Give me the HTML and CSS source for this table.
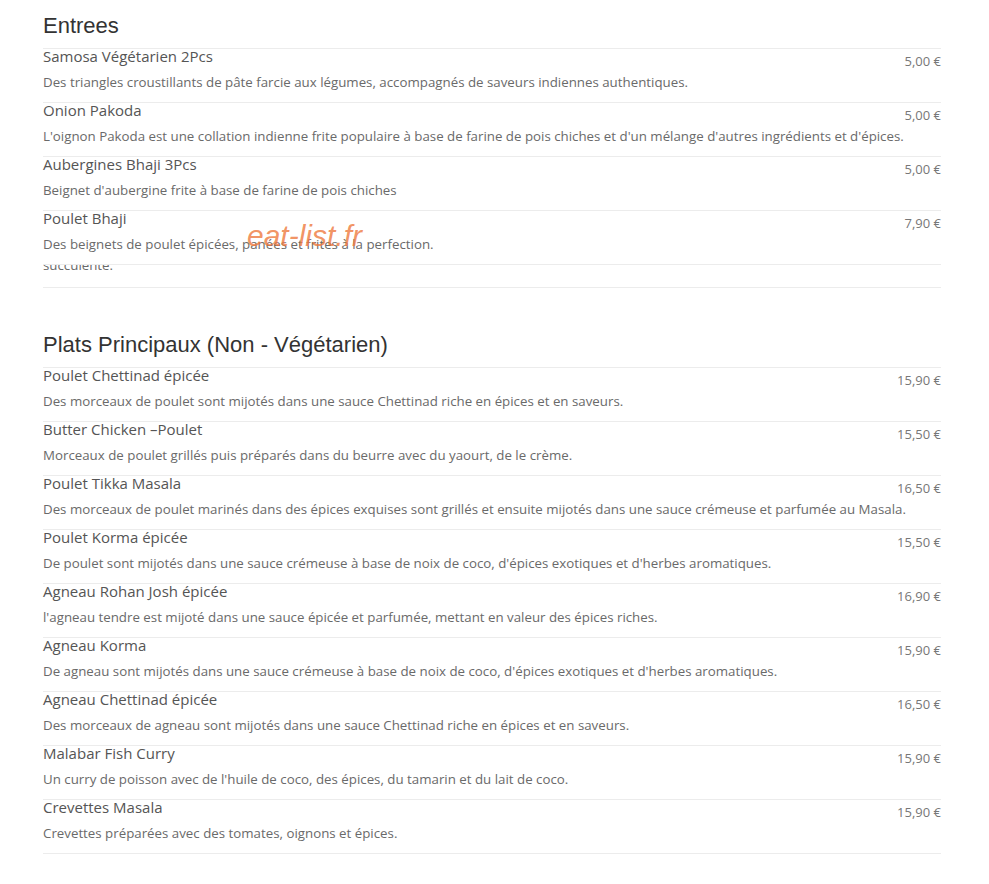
FILE: index.html
```html
<!DOCTYPE html>
<html lang="fr">
<head>
<meta charset="utf-8">
<title>Menu</title>
<link rel="stylesheet" href="styles.css">
</head>
<body>
<div class="page">
  <section class="section first">
    <h2 class="section-title">Entrees</h2>
    <ul class="items">
      <li class="item">
        <div class="name">Samosa Végétarien 2Pcs</div><div class="price">5,00 €</div>
        <div class="desc">Des triangles croustillants de pâte farcie aux légumes, accompagnés de saveurs indiennes authentiques.</div>
      </li>
      <li class="item">
        <div class="name">Onion Pakoda</div><div class="price">5,00 €</div>
        <div class="desc">L'oignon Pakoda est une collation indienne frite populaire à base de farine de pois chiches et d'un mélange d'autres ingrédients et d'épices.</div>
      </li>
      <li class="item">
        <div class="name">Aubergines Bhaji 3Pcs</div><div class="price">5,00 €</div>
        <div class="desc">Beignet d'aubergine frite à base de farine de pois chiches</div>
      </li>
      <li class="item">
        <div class="name">Poulet Bhaji</div><div class="price">7,90 €</div>
        <div class="desc">Des beignets de poulet épicées, panées et frites à la perfection.</div>
        <span class="watermark">eat-list.fr</span>
      </li>
      <li class="item clipped">
        <div class="clip-text">succulente.</div>
      </li>
    </ul>
  </section>

  <section class="section">
    <h2 class="section-title">Plats Principaux (Non - Végétarien)</h2>
    <ul class="items">
      <li class="item">
        <div class="name">Poulet Chettinad épicée</div><div class="price">15,90 €</div>
        <div class="desc">Des morceaux de poulet sont mijotés dans une sauce Chettinad riche en épices et en saveurs.</div>
      </li>
      <li class="item">
        <div class="name">Butter Chicken –Poulet</div><div class="price">15,50 €</div>
        <div class="desc">Morceaux de poulet grillés puis préparés dans du beurre avec du yaourt, de le crème.</div>
      </li>
      <li class="item">
        <div class="name">Poulet Tikka Masala</div><div class="price">16,50 €</div>
        <div class="desc">Des morceaux de poulet marinés dans des épices exquises sont grillés et ensuite mijotés dans une sauce crémeuse et parfumée au Masala.</div>
      </li>
      <li class="item">
        <div class="name">Poulet Korma épicée</div><div class="price">15,50 €</div>
        <div class="desc">De poulet sont mijotés dans une sauce crémeuse à base de noix de coco, d'épices exotiques et d'herbes aromatiques.</div>
      </li>
      <li class="item">
        <div class="name">Agneau Rohan Josh épicée</div><div class="price">16,90 €</div>
        <div class="desc">l'agneau tendre est mijoté dans une sauce épicée et parfumée, mettant en valeur des épices riches.</div>
      </li>
      <li class="item">
        <div class="name">Agneau Korma</div><div class="price">15,90 €</div>
        <div class="desc">De agneau sont mijotés dans une sauce crémeuse à base de noix de coco, d'épices exotiques et d'herbes aromatiques.</div>
      </li>
      <li class="item">
        <div class="name">Agneau Chettinad épicée</div><div class="price">16,50 €</div>
        <div class="desc">Des morceaux de agneau sont mijotés dans une sauce Chettinad riche en épices et en saveurs.</div>
      </li>
      <li class="item">
        <div class="name">Malabar Fish Curry</div><div class="price">15,90 €</div>
        <div class="desc">Un curry de poisson avec de l'huile de coco, des épices, du tamarin et du lait de coco.</div>
      </li>
      <li class="item">
        <div class="name">Crevettes Masala</div><div class="price">15,90 €</div>
        <div class="desc">Crevettes préparées avec des tomates, oignons et épices.</div>
      </li>
    </ul>
  </section>
</div>
</body>
</html>
```

FILE: styles.css
```css
html, body {
  margin: 0;
  padding: 0;
  background: #ffffff;
}

.page {
  width: 898px;
  padding: 13px 0 0 43px;
  font-family: "Open Sans", "Liberation Sans", sans-serif;
}

.section {
  margin-top: 44px;
}

.section.first {
  margin-top: 0;
}

.section-title {
  margin: 0 0 9px 0;
  font-family: "Liberation Sans", Arial, sans-serif;
  font-weight: normal;
  font-size: 22px;
  line-height: 26px;
  color: #333333;
}

.items {
  list-style: none;
  margin: 0;
  padding: 0;
  border-bottom: 1px solid #ececec;
}

.item {
  display: grid;
  grid-template-columns: 1fr auto;
  grid-template-rows: 17px auto;
  row-gap: 7px;
  align-content: start;
  height: 53px;
  border-top: 1px solid #ececec;
  position: relative;
}

.name {
  grid-column: 1;
  grid-row: 1;
  margin-top: -1px;
  font-size: 15px;
  line-height: 17px;
  color: #555555;
}

.price {
  grid-column: 2;
  grid-row: 1;
  padding-top: 3px;
  font-size: 13px;
  line-height: 18px;
  color: #777777;
  white-space: nowrap;
}

.desc {
  grid-column: 1 / span 2;
  grid-row: 2;
  font-size: 13.3px;
  line-height: 18px;
  color: #6a6a6a;
  white-space: nowrap;
}

.item.clipped {
  display: block;
  height: 22px;
  overflow: hidden;
}

.clip-text {
  margin-top: -9px;
  font-size: 13.3px;
  line-height: 18px;
  color: #6a6a6a;
}

.watermark {
  position: absolute;
  left: 204px;
  top: 8px;
  font-family: "Liberation Sans", Arial, sans-serif;
  font-style: italic;
  font-size: 30px;
  line-height: 34px;
  color: rgba(238, 120, 60, 0.8);
  pointer-events: none;
}
```
